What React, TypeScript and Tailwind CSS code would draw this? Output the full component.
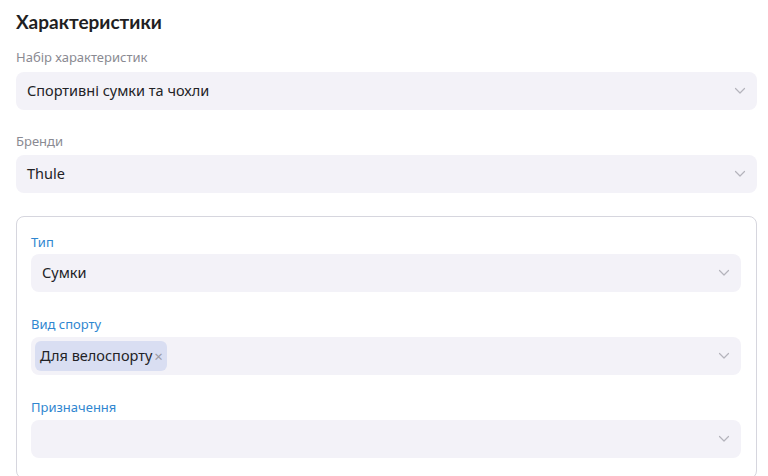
import React from "react";

const Chevron = () => (
  <svg width="12" height="8" viewBox="0 0 12 8" fill="none" className="shrink-0">
    <path d="M1.5 1.5 L6 6 L10.5 1.5" stroke="#b4b4bc" strokeWidth="1.2" strokeLinecap="round" strokeLinejoin="round" />
  </svg>
);

function Select({ children }: { children?: React.ReactNode }) {
  return (
    <div className="flex h-[38px] items-center rounded-lg bg-[#f3f2f8] pr-[11px]">
      <div className="flex flex-1 items-center">{children}</div>
      <Chevron />
    </div>
  );
}

export default function App() {
  const font = { fontFamily: '"Noto Sans", "Open Sans", sans-serif' };
  return (
    <div className="bg-white w-[768px] h-[476px] overflow-hidden pl-4 pr-[11px] text-[#222226]" style={font}>
      <h2
        className="pt-[9px] text-[19px] font-bold leading-[26px] text-[#1f1f23]"
        style={{ fontFamily: 'Lato, "Noto Sans", sans-serif' }}
      >
        Характеристики
      </h2>
      <div className="mt-[13px] text-[13px] leading-[18px] text-[#8a8a92]">Набір характеристик</div>
      <div className="mt-[6px]">
        <Select>
          <span className="pl-[11px] text-[14.5px]">Спортивні сумки та чохли</span>
        </Select>
      </div>
      <div className="mt-[22px] text-[13px] leading-[18px] text-[#8a8a92]">Бренди</div>
      <div className="mt-[5px]">
        <Select>
          <span className="pl-[11px] text-[14.5px]">Thule</span>
        </Select>
      </div>
      <div className="mt-[23px] rounded-lg border border-[#d6d6de] pl-[14px] pr-[15px] pt-[16px] pb-[20px]">
        <div className="text-[13px] leading-[18px] text-[#2f86d0]">Тип</div>
        <div className="mt-[3px]">
          <Select>
            <span className="pl-[11px] text-[14.5px]">Сумки</span>
          </Select>
        </div>
        <div className="mt-[23px] text-[13px] leading-[18px] text-[#2f86d0]">Вид спорту</div>
        <div className="mt-[4px]">
          <Select>
            <span className="ml-[4px] flex h-[30px] items-center rounded-md bg-[#d9def2] pl-[5px] pr-[4px] text-[14.5px]">
              Для велоспорту
              <span className="ml-[2px] text-[15px] leading-none text-[#9a9aa4]">×</span>
            </span>
          </Select>
        </div>
        <div className="mt-[23px] text-[13px] leading-[18px] text-[#2f86d0]">Призначення</div>
        <div className="mt-[4px]">
          <Select />
        </div>
      </div>
    </div>
  );
}
